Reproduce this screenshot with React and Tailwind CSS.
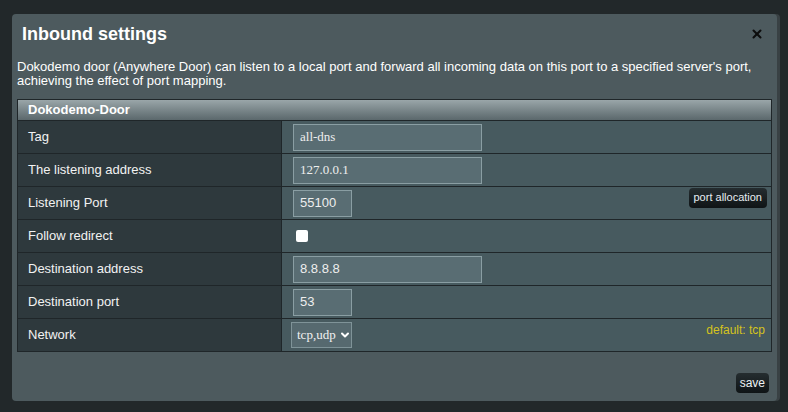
import { X, ChevronDown } from "lucide-react";

const rows = [
  { label: "Tag", kind: "input", value: "all-dns", w: "w-[189px]", serif: true },
  { label: "The listening address", kind: "input", value: "127.0.0.1", w: "w-[189px]", serif: true },
  { label: "Listening Port", kind: "input", value: "55100", w: "w-[59px]", extra: "port" },
  { label: "Follow redirect", kind: "checkbox" },
  { label: "Destination address", kind: "input", value: "8.8.8.8", w: "w-[189px]" },
  { label: "Destination port", kind: "input", value: "53", w: "w-[59px]" },
  { label: "Network", kind: "select", value: "tcp,udp", extra: "hint" },
];

function Field({ row }) {
  if (row.kind === "checkbox") {
    return <span className="ml-[14px] block h-[12px] w-[12px] rounded-[2px] bg-white" />;
  }
  if (row.kind === "select") {
    return (
      <div className="ml-[9px] flex h-[26px] w-[61px] items-center gap-[3px] border border-[#7f9398] bg-[#56696f] pl-[5px] text-[13px] text-[#f0f0f0] [font-family:'Liberation_Serif',serif]">
        {row.value}
        <ChevronDown size={12} strokeWidth={4} className="text-white" />
      </div>
    );
  }
  return (
    <div
      className={`ml-[11px] flex h-[27px] ${row.w} items-center border border-[#8a9ea3] bg-[#596d73] px-[6px] text-[13px] text-[#eeeeee] ${
        row.serif ? "[font-family:'Liberation_Serif',serif]" : ""
      }`}
    >
      {row.value}
    </div>
  );
}

export default function App() {
  return (
    <div className="h-[412px] w-full overflow-hidden bg-[#22282a] pl-[12px] pt-[14px] [font-family:'Liberation_Sans',Arial,sans-serif]">
      <div className="flex h-[387px] w-[765px] flex-col rounded-[4px] bg-[#4d5a5e] shadow-[3px_0_0_0_#394144]">
        <div className="flex h-[40px] items-center justify-between pl-[10px] pr-[13px]">
          <h1 className="text-[18px] font-bold text-white">Inbound settings</h1>
          <X size={14} strokeWidth={3.5} className="text-[#0d0d0d]" />
        </div>
        <p className="mt-[6px] px-[5px] text-[13px] leading-[14px] text-white">
          Dokodemo door (Anywhere Door) can listen to a local port and forward all incoming data on this port to a specified server's port, achieving the effect of port mapping.
        </p>
        <div className="mx-[5px] mt-[11px] border border-[#1f2629]">
          <div className="flex h-[21px] items-center border-b border-[#1f2629] bg-gradient-to-b from-[#9aa6a9] to-[#5b686c] pl-[10px] text-[13px] font-bold text-white">
            Dokodemo-Door
          </div>
          {rows.map((row, i) => (
            <div
              key={row.label}
              className={`grid grid-cols-[264px_1fr] ${i < rows.length - 1 ? "h-[33px] border-b border-[#1f2629]" : "h-[32px]"}`}
            >
              <div className="flex items-center border-r border-[#1f2629] bg-[#2e393d] pl-[10px] text-[13px] text-[#f2f2f2]">
                {row.label}
              </div>
              <div className="flex items-center justify-between bg-[#475a5f]">
                <Field row={row} />
                {row.extra === "port" && (
                  <button className="mr-[4px] mb-[11px] h-[20px] rounded-[4px] bg-gradient-to-b from-[#252d30] to-[#0f1416] px-[5px] text-[11px] text-[#e6eef2]">
                    port allocation
                  </button>
                )}
                {row.extra === "hint" && (
                  <span className="mr-[6px] mb-[10px] text-[12px] text-[#d5c31d]">default: tcp</span>
                )}
              </div>
            </div>
          ))}
        </div>
        <div className="mt-auto mb-[8px] flex justify-end pr-[8px]">
          <button className="h-[20px] rounded-[4px] bg-gradient-to-b from-[#252d30] to-[#0f1416] px-[4px] text-[12px] text-[#eef2f4]">
            save
          </button>
        </div>
      </div>
    </div>
  );
}
